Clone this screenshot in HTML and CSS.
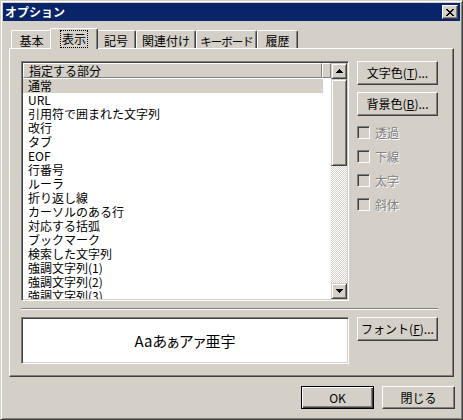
FILE: index.html
```html
<!DOCTYPE html>
<html lang="ja">
<head>
<meta charset="utf-8">
<title>オプション</title>
<link rel="stylesheet" href="styles.css">
</head>
<body>
<div class="window">
  <div class="titlebar">
    <span class="title">オプション</span>
    <button class="close" aria-label="閉じる">
      <svg width="8" height="7" viewBox="0 0 8 7" shape-rendering="crispEdges"><path fill="#000" d="M0 0h2v1h-2z M6 0h2v1h-2z M1 1h2v1h-2z M5 1h2v1h-2z M2 2h4v1h-4z M3 3h2v1h-2z M2 4h4v1h-4z M1 5h2v1h-2z M5 5h2v1h-2z M0 6h2v1h-2z M6 6h2v1h-2z"/></svg>
    </button>
  </div>
  <div class="client">
    <div class="tabs">
      <div class="tab w41">基本</div>
      <div class="tab sel"><span class="focus">表示</span></div>
      <div class="tab w40">記号</div>
      <div class="tab w60">関連付け</div>
      <div class="tab w61 tight">キーボード</div>
      <div class="tab w41">履歴</div>
    </div>
    <div class="panel">
      <div class="panel-grid">
        <div class="listbox">
          <div class="list-main">
            <div class="list-header">
              <div class="hcol">指定する部分</div>
              <div class="hrest"></div>
            </div>
            <div class="items">
              <div class="item selected">通常</div>
              <div class="item">URL</div>
              <div class="item">引用符で囲まれた文字列</div>
              <div class="item">改行</div>
              <div class="item">タブ</div>
              <div class="item">EOF</div>
              <div class="item">行番号</div>
              <div class="item">ルーラ</div>
              <div class="item">折り返し線</div>
              <div class="item">カーソルのある行</div>
              <div class="item">対応する括弧</div>
              <div class="item">ブックマーク</div>
              <div class="item">検索した文字列</div>
              <div class="item">強調文字列(1)</div>
              <div class="item">強調文字列(2)</div>
              <div class="item">強調文字列(3)</div>
            </div>
          </div>
          <div class="vscroll">
            <div class="sbtn"><svg width="7" height="4" viewBox="0 0 7 4" shape-rendering="crispEdges"><path fill="#000" d="M3 0h1v1h-1z M2 1h3v1h-3z M1 2h5v1h-5z M0 3h7v1h-7z"/></svg></div>
            <div class="thumb"></div>
            <div class="track"></div>
            <div class="sbtn"><svg width="7" height="4" viewBox="0 0 7 4" shape-rendering="crispEdges"><path fill="#000" d="M0 0h7v1h-7z M1 1h5v1h-5z M2 2h3v1h-3z M3 3h1v1h-1z"/></svg></div>
          </div>
        </div>
        <div class="side">
          <button class="btn side-btn">文字色(<u>T</u>)...</button>
          <button class="btn side-btn">背景色(<u>B</u>)...</button>
          <div class="checks">
            <div class="check"><span class="cb"></span><span class="disabled">透過</span></div>
            <div class="check"><span class="cb"></span><span class="disabled">下線</span></div>
            <div class="check"><span class="cb"></span><span class="disabled">太字</span></div>
            <div class="check"><span class="cb"></span><span class="disabled">斜体</span></div>
          </div>
        </div>
        <div class="sep"></div>
        <div class="preview">Aaあぁアァ亜宇</div>
        <div class="side">
          <button class="btn side-btn">フォント(<u>F</u>)...</button>
        </div>
      </div>
    </div>
    <div class="footer">
      <button class="btn foot-btn default">OK</button>
      <button class="btn foot-btn">閉じる</button>
    </div>
  </div>
</div>
</body>
</html>
```

FILE: styles.css
```css
html, body {
  margin: 0;
  padding: 0;
  background: #D4D0C8;
}

body {
  font-family: "MS UI Gothic", "Noto Sans CJK JP", sans-serif;
  font-size: 12px;
  color: #000;
}

.window {
  width: 463px;
  height: 420px;
  box-sizing: border-box;
  border: 1px solid;
  border-color: #D4D0C8 #404040 #404040 #D4D0C8;
  box-shadow: inset 1px 1px #fff, inset -1px -1px #808080;
  padding: 2px;
  background: #D4D0C8;
  display: flex;
  flex-direction: column;
}

/* Title bar */
.titlebar {
  height: 18px;
  flex: none;
  background: #0A246A;
  display: flex;
  align-items: center;
  justify-content: space-between;
  padding: 0 2px;
  color: #fff;
}

.title {
  font-weight: bold;
  font-size: 12px;
  line-height: 14px;
}

.close {
  width: 16px;
  height: 14px;
  box-sizing: border-box;
  padding: 0;
  margin: 0;
  border: 1px solid;
  border-color: #fff #404040 #404040 #fff;
  box-shadow: inset -1px -1px #808080;
  background: #D4D0C8;
  display: flex;
  align-items: center;
  justify-content: center;
}

/* Client area */
.client {
  flex: 1;
  padding: 7px 0 0 6px;
  display: flex;
  flex-direction: column;
}

/* Tabs */
.tabs {
  display: flex;
  align-items: flex-end;
  height: 20px;
  padding-left: 2px;
}

.tab {
  box-sizing: border-box;
  height: 18px;
  border-top: 1px solid #fff;
  border-left: 1px solid #fff;
  border-right: 1px solid #404040;
  box-shadow: inset -1px 0 #808080;
  border-radius: 2px 2px 0 0;
  display: flex;
  align-items: center;
  justify-content: center;
  padding-top: 2px;
  line-height: 14px;
  white-space: nowrap;
  overflow: hidden;
}

.w40 { width: 40px; }
.w41 { width: 41px; }
.w60 { width: 60px; }
.w61 { width: 61px; }

.tight {
  letter-spacing: -1px;
  font-size: 11.5px;
}

.tab.sel {
  width: 48px;
  height: 21px;
  margin: 0 -2px -1px;
  position: relative;
  z-index: 1;
  background: #D4D0C8;
  align-items: flex-start;
  padding-top: 2px;
  overflow: visible;
}

.focus {
  outline: 1px dotted #000;
  outline-offset: 0;
  padding: 1px;
  line-height: 14px;
}

/* Panel */
.panel {
  width: 445px;
  height: 329px;
  box-sizing: border-box;
  border: 1px solid;
  border-color: #fff #404040 #404040 #fff;
  box-shadow: inset -1px -1px #808080;
  padding: 12px 0 0 11px;
}

.panel-grid {
  display: grid;
  grid-template-columns: 328px 81px;
  grid-template-rows: 240px auto 47px;
  column-gap: 8px;
}

/* Sunken controls */
.listbox,
.preview {
  box-sizing: border-box;
  border: 1px solid;
  border-color: #808080 #fff #fff #808080;
  box-shadow: inset 1px 1px #404040, inset -1px -1px #D4D0C8;
  padding: 1px;
  background: #fff;
}

.listbox {
  display: flex;
  height: 240px;
}

.list-main {
  flex: 1;
  overflow: hidden;
  background: #fff;
}

.list-header {
  display: flex;
  height: 15px;
  background: #D4D0C8;
}

.hcol,
.hrest {
  box-sizing: border-box;
  height: 15px;
  border-top: 1px solid #fff;
  border-left: 1px solid #fff;
  border-bottom: 1px solid #808080;
  border-right: 1px solid #808080;
  line-height: 13px;
  white-space: nowrap;
}

.hcol {
  width: 299px;
  padding-left: 5px;
}

.hrest {
  flex: 1;
}

.items {
  padding-top: 1px;
}

.item {
  width: 300px;
  height: 14px;
  line-height: 14px;
  padding-left: 5px;
  box-sizing: border-box;
  white-space: nowrap;
}

.item.selected {
  background: #D4D0C8;
}

/* Scrollbar */
.vscroll {
  width: 16px;
  display: flex;
  flex-direction: column;
}

.sbtn,
.thumb {
  box-sizing: border-box;
  border: 1px solid;
  border-color: #D4D0C8 #404040 #404040 #D4D0C8;
  box-shadow: inset 1px 1px #fff, inset -1px -1px #808080;
  background: #D4D0C8;
}

.sbtn {
  height: 16px;
  flex: none;
  display: flex;
  align-items: center;
  justify-content: center;
}

.thumb {
  height: 87px;
  flex: none;
}

.track {
  flex: 1;
  background: repeating-conic-gradient(#fff 0 25%, #D4D0C8 0 50%) 0 0 / 2px 2px;
}

/* Buttons */
.btn {
  font: inherit;
  color: #000;
  box-sizing: border-box;
  margin: 0;
  padding: 0;
  border: 1px solid;
  border-color: #fff #404040 #404040 #fff;
  box-shadow: inset -1px -1px #808080;
  background: #D4D0C8;
  line-height: 14px;
  white-space: nowrap;
}

.btn u {
  text-decoration: underline;
  text-underline-offset: 1px;
}

.side {
  display: flex;
  flex-direction: column;
}

.side-btn {
  width: 81px;
  height: 24px;
  margin-bottom: 7px;
}

.checks {
  display: flex;
  flex-direction: column;
  gap: 11px;
  margin-top: 3px;
}

.check {
  display: flex;
  align-items: center;
  height: 13px;
  gap: 5px;
}

.cb {
  width: 13px;
  height: 13px;
  box-sizing: border-box;
  border: 1px solid;
  border-color: #808080 #fff #fff #808080;
  box-shadow: inset 1px 1px #404040, inset -1px -1px #D4D0C8;
  background: #D4D0C8;
  flex: none;
}

.disabled {
  color: #808080;
  text-shadow: 1px 1px 0 #fff;
  line-height: 13px;
}

.sep {
  grid-column: 1 / 3;
  height: 2px;
  margin: 7px 0;
  border-top: 1px solid #808080;
  border-bottom: 1px solid #fff;
  box-sizing: border-box;
}

.preview {
  height: 47px;
  display: flex;
  align-items: center;
  justify-content: center;
  font-size: 15px;
  line-height: 18px;
  font-feature-settings: "palt";
}

/* Footer */
.footer {
  display: flex;
  justify-content: flex-start;
  gap: 8px;
  padding-left: 292px;
  margin-top: 9px;
}

.foot-btn {
  width: 73px;
  height: 23px;
}

.foot-btn.default {
  border: 1px solid #000;
  box-shadow: inset 1px 1px #fff, inset -1px -1px #404040, inset -2px -2px #808080;
}
```
